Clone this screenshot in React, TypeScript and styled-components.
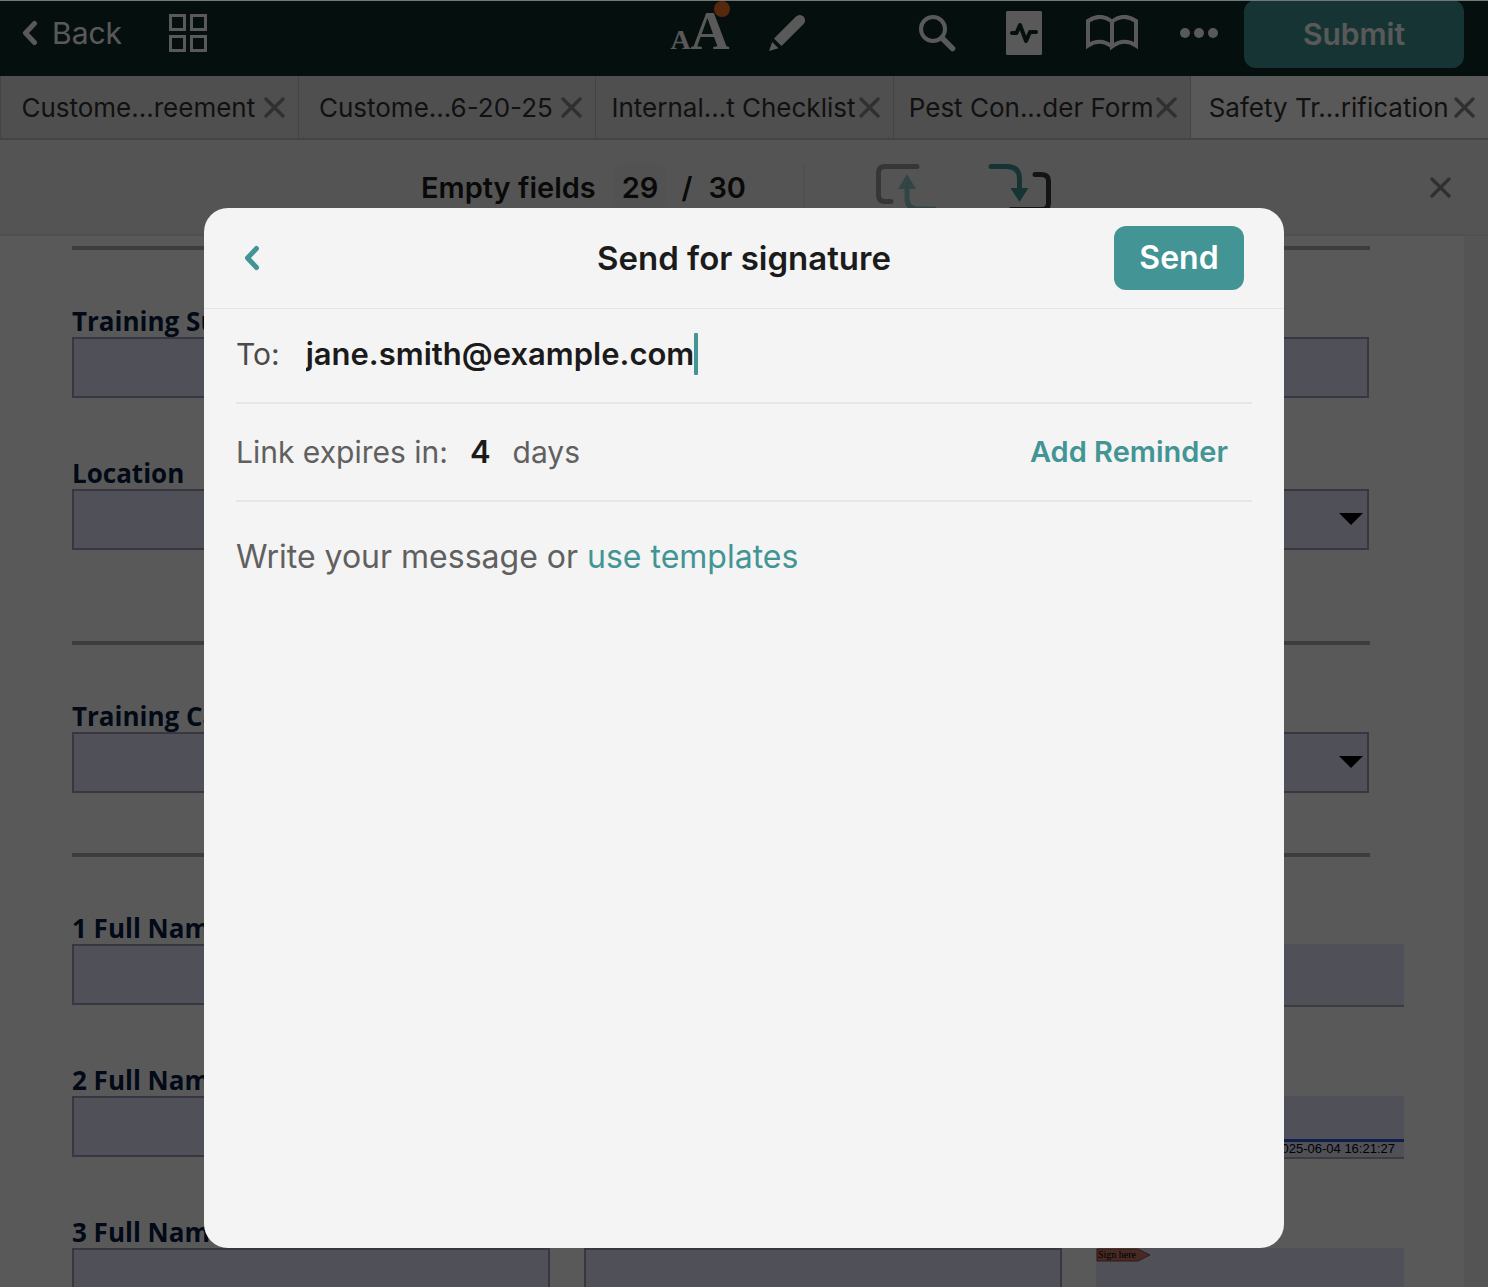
import React from "react";
import styled, { createGlobalStyle } from "styled-components";

const teal = "#429594";
const sans = `Inter, "Open Sans", sans-serif`;

const GlobalStyle = createGlobalStyle`
  * { box-sizing: border-box; }
  body { margin: 0; font-family: ${sans}; color: #1b1b1b; }
  button, input, select, textarea { font: inherit; color: inherit; margin: 0; }
  button { border: 0; padding: 0; background: none; cursor: pointer; }
  svg { display: block; flex: none; }
`;

const Screen = styled.div`
  display: flex;
  flex-direction: column;
  height: 100vh;
  overflow: hidden;
  background: #fff;
`;

const Header = styled.header`
  display: grid;
  grid-template-columns: 1fr auto 1fr;
  flex: none;
  height: 76px;
  padding: 0 24px 0 12px;
  background: #112e28;
  color: #fff;
`;

const Group = styled.div<{ $gap: number; $end?: boolean }>`
  display: flex;
  align-items: center;
  justify-content: ${(p) => (p.$end ? "flex-end" : "flex-start")};
  gap: ${(p) => p.$gap}px;
  height: 65px;
`;

const BackButton = styled.button`
  display: flex;
  align-items: center;
  gap: 14px;
  padding-left: 10px;
  font-size: 30px;
  line-height: 40px;
`;

const TextSizeButton = styled.button`
  position: relative;
  display: flex;
  align-items: baseline;
  padding-top: 6px;
  font-family: "Liberation Serif", serif;
  font-weight: 700;
  line-height: 56px;
`;

const Letter = styled.span<{ $size: number }>`
  font-size: ${(p) => p.$size}px;
`;

const Dot = styled.span`
  position: absolute;
  top: 4px;
  right: 0;
  width: 16px;
  height: 16px;
  border-radius: 50%;
  background: #f5732a;
`;

const SubmitButton = styled.button`
  width: 220px;
  height: 68px;
  border-radius: 12px;
  background: ${teal};
  color: #fff;
  font-size: 30px;
  font-weight: 600;
`;

const HeaderEnd = styled.div`
  display: flex;
  justify-content: flex-end;
  gap: 26px;
`;

const Tabs = styled.nav`
  display: grid;
  grid-template-columns: repeat(5, 1fr);
  flex: none;
  height: 64px;
`;

const Tab = styled.div<{ $active?: boolean }>`
  display: flex;
  align-items: center;
  min-width: 0;
  padding: 2px 12px 0;
  border-left: 1px solid #c4c4c4;
  border-bottom: 2px solid #c4c4c4;
  background: ${(p) => (p.$active ? "#fff" : "#e2e2e2")};
`;

const TabTitle = styled.button`
  flex: 1;
  min-width: 0;
  font-size: 26px;
  line-height: 32px;
  white-space: nowrap;
  color: #333;
`;

const FieldBar = styled.div`
  display: grid;
  grid-template-columns: 1fr auto 1fr;
  align-items: center;
  flex: none;
  height: 96px;
  padding: 2px 36px 0;
  border-bottom: 2px solid #e6e6e6;
  background: #f1f1f1;
`;

const FieldCounter = styled.div`
  display: flex;
  align-items: center;
  grid-column: 2;
  padding-right: 14px;
  font-size: 29px;
  line-height: 50px;
  font-weight: 600;
`;

const CountChip = styled.span`
  margin: 0 16px 0 19px;
  padding: 0 7px;
  border-radius: 8px;
  background: #eaeaea;
`;

const Total = styled.span`
  margin-left: 16px;
`;

const Divider = styled.span`
  width: 2px;
  height: 50px;
  margin: 0 69px 0 57px;
  background: #e6e6e6;
`;

const NavButtons = styled.div`
  display: flex;
  gap: 43px;
`;

const CloseBar = styled.button`
  justify-self: end;
`;

const DocumentArea = styled.main`
  flex: 1;
  min-height: 0;
  overflow: hidden;
  padding-right: 24px;
  background: #f1f1f1;
`;

const Sheet = styled.form`
  padding: 10px 60px 0 72px;
  background: #fff;
  font-family: "Open Sans", sans-serif;
`;

const Section = styled.section<{ $gap: number; $after?: number; $wide?: boolean }>`
  display: flex;
  flex-direction: column;
  gap: ${(p) => p.$gap}px;
  margin-right: ${(p) => (p.$wide ? 0 : 35)}px;
  padding: 51px 0 ${(p) => p.$after || 0}px;
`;

const Rule = styled.hr`
  height: 4px;
  margin: 0 34px 0 0;
  border: 0;
  background: #b0b0b0;
`;

const Field = styled.div`
  display: flex;
  flex-direction: column;
  min-width: 0;
`;

const Label = styled.label`
  height: 36px;
  padding-top: 2px;
  font-size: 26px;
  line-height: 36px;
  font-weight: 700;
  white-space: nowrap;
  color: #061a44;
`;

const Box = styled.input`
  width: 100%;
  height: 61px;
  padding: 0 12px;
  border: 2px solid #a09eba;
  border-radius: 0;
  background: #e5e4ff;
  outline: 0;
`;

const SelectWrap = styled.div`
  position: relative;
`;

const SelectBox = styled(Box).attrs({ as: "select" })`
  appearance: none;
`;

const SelectArrow = styled.svg`
  position: absolute;
  top: 24px;
  right: 6px;
  pointer-events: none;
`;

const NameRow = styled.div`
  display: grid;
  grid-template-columns: 478fr 478fr 308fr;
  gap: 34px;
`;

const Signature = styled.div`
  display: flex;
  flex-direction: column;
  height: 63px;
  margin-top: 36px;
  border-bottom: 2px solid #acacb4;
  background: #e5e4ff;
`;

const Stamp = styled.time`
  margin-top: auto;
  padding: 0 9px 2px 0;
  border-top: 3px solid #2a5bd0;
  font-family: "Liberation Sans", sans-serif;
  font-size: 13px;
  line-height: 13px;
  text-align: right;
  color: #000;
`;

const SignTag = styled.button`
  position: relative;
  width: 55px;
  height: 14px;
  padding-left: 2px;
  font-family: "Liberation Serif", serif;
  font-size: 10px;
  line-height: 12px;
  text-align: left;
  color: #000;
`;

const TagShape = styled.svg`
  position: absolute;
  inset: 0;
`;

const TagText = styled.span`
  position: relative;
  display: block;
`;

const Overlay = styled.div`
  position: fixed;
  inset: 0;
  display: flex;
  justify-content: center;
  padding: 207px 24px 39px;
  border-top: 1px solid #707977;
  background: rgba(0, 0, 0, 0.65);
`;

const Modal = styled.section`
  display: flex;
  flex-direction: column;
  width: 100%;
  max-width: 1080px;
  border-radius: 24px;
  background: #f4f4f4;
`;

const ModalHeader = styled.header`
  display: grid;
  grid-template-columns: 1fr auto 1fr;
  align-items: center;
  height: 101px;
  padding: 0 40px;
  border-bottom: 1px solid #e6e6e6;
`;

const ModalTitle = styled.h1`
  margin: 0;
  font-size: 33px;
  line-height: 42px;
  font-weight: 600;
`;

const ModalBack = styled.button`
  justify-self: start;
`;

const SendButton = styled.button`
  justify-self: end;
  width: 130px;
  height: 64px;
  border-radius: 12px;
  background: ${teal};
  color: #fff;
  font-size: 32px;
  line-height: 40px;
  font-weight: 600;
`;

const ModalRow = styled.div<{ $muted?: boolean }>`
  display: flex;
  align-items: center;
  height: ${(p) => (p.$muted ? 98 : 95)}px;
  margin: 0 32px;
  padding-bottom: ${(p) => (p.$muted ? 0 : 4)}px;
  border-bottom: 2px solid #e6e6e6;
  font-size: 30px;
  line-height: 42px;
  color: ${(p) => (p.$muted ? "#606060" : "#4a4a4a")};
`;

const InlineInput = styled.input`
  field-sizing: content;
  height: 42px;
  padding: 0;
  border: 0;
  outline: 0;
  background: none;
  color: #1b1b1b;
  font-size: 31px;
  font-weight: 600;
`;

const RowLabel = styled.label<{ $gap: number }>`
  margin-right: ${(p) => p.$gap}px;
`;

const Caret = styled.span`
  width: 4px;
  height: 42px;
  border-radius: 1px;
  background: ${teal};
`;

const Unit = styled.span`
  margin-left: 22px;
`;

const Reminder = styled.button`
  margin-left: auto;
  padding-right: 24px;
  color: ${teal};
  font-size: 29px;
  font-weight: 600;
`;

const Hint = styled.p`
  margin: 34px 32px 0;
  font-size: 32px;
  line-height: 42px;
  color: #606060;
`;

const TemplatesLink = styled.a`
  color: ${teal};
  text-decoration: none;
`;

const Message = styled.textarea`
  flex: 1;
  margin: 12px 32px 32px;
  padding: 0;
  border: 0;
  outline: 0;
  resize: none;
  background: none;
  font-size: 32px;
`;

function Chevron({ color }: { color: string }) {
  return (
    <svg width="16" height="26" viewBox="0 0 16 26" fill="none" stroke={color} strokeWidth="5" strokeLinecap="round" strokeLinejoin="round">
      <path d="M12.5 3.5 L3.5 13 L12.5 22.5" />
    </svg>
  );
}

function Cross() {
  return (
    <svg width="22" height="22" viewBox="0 0 22 22" fill="none" stroke="#8a8a8a" strokeWidth="3.4" strokeLinecap="round">
      <path d="M2 2 L19 19 M19 2 L2 19" />
    </svg>
  );
}

const tabs = [
  "Custome...reement",
  "Custome...6-20-25",
  "Internal...t Checklist",
  "Pest Con...der Form",
  "Safety Tr...rification",
];

function TextField({ id, label }: { id: string; label: string }) {
  return (
    <Field>
      <Label htmlFor={id}>{label}</Label>
      <Box id={id} type="text" />
    </Field>
  );
}

function SelectField({ id, label }: { id: string; label: string }) {
  return (
    <Field>
      <Label htmlFor={id}>{label}</Label>
      <SelectWrap>
        <SelectBox id={id} />
        <SelectArrow width="24" height="12" viewBox="0 0 24 12">
          <path d="M0 0 H24 L12 12 Z" fill="#000" />
        </SelectArrow>
      </SelectWrap>
    </Field>
  );
}

function Person({ n, children }: { n: number; children?: React.ReactNode }) {
  return (
    <NameRow>
      <TextField id={`name-${n}`} label={`${n} Full Name`} />
      <TextField id={`title-${n}`} label="Title" />
      <Signature>{children}</Signature>
    </NameRow>
  );
}

export default function App() {
  return (
    <>
      <GlobalStyle />
      <Screen>
        <Header>
          <Group $gap={47}>
            <BackButton type="button">
              <Chevron color="#fff" />
              Back
            </BackButton>
            <button type="button" aria-label="Pages">
              <svg width="38" height="38" viewBox="0 0 38 38" fill="none" stroke="#fff" strokeWidth="3">
                <path d="M1.5 1.5 H15.5 V15.5 H1.5 Z M22.5 1.5 H36.5 V15.5 H22.5 Z M1.5 22.5 H15.5 V36.5 H1.5 Z M22.5 22.5 H36.5 V36.5 H22.5 Z" />
              </svg>
            </button>
          </Group>
          <Group $gap={38}>
            <TextSizeButton type="button" aria-label="Text size">
              <Letter $size={28}>A</Letter>
              <Letter $size={54}>A</Letter>
              <Dot />
            </TextSizeButton>
            <button type="button" aria-label="Edit">
              <svg width="38" height="38" viewBox="0 0 38 38" fill="#fff">
                <path d="M28 2.5 a5.2 5.2 0 0 1 7.6 7.4 L13.5 32 L6 24.6 Z M4.2 28 L10.4 34.2 L1 37 Z" />
              </svg>
            </button>
          </Group>
          <HeaderEnd>
            <Group $gap={42} $end>
              <button type="button" aria-label="Search">
                <svg width="46" height="38" viewBox="0 0 46 38" fill="none" stroke="#fff" strokeLinecap="round">
                  <circle cx="15" cy="15" r="12" strokeWidth="4" />
                  <path d="M24 24 L34.5 34.5" strokeWidth="5.5" />
                </svg>
              </button>
              <button type="button" aria-label="Activity">
                <svg width="38" height="44" viewBox="0 0 38 44">
                  <rect width="36" height="44" rx="1.5" fill="#fff" />
                  <path d="M6 22 H10.5 L14 14 L20 30 L24 21 H30" fill="none" stroke="#112e28" strokeWidth="4" strokeLinecap="round" strokeLinejoin="round" />
                </svg>
              </button>
              <button type="button" aria-label="Guide">
                <svg width="52" height="36" viewBox="0 0 52 36" fill="none" stroke="#fff" strokeWidth="4">
                  <path d="M26 31.5 Q14 22.5 2 30.5 V6 Q14 -2.5 26 6.5 Q38 -2.5 50 6 V30.5 Q38 22.5 26 31.5 V6.5" />
                </svg>
              </button>
              <button type="button" aria-label="More">
                <svg width="38" height="10" viewBox="0 0 38 10" fill="#fff">
                  <circle cx="5" cy="5" r="5" />
                  <circle cx="19" cy="5" r="5" />
                  <circle cx="33" cy="5" r="5" />
                </svg>
              </button>
            </Group>
            <SubmitButton type="button">Submit</SubmitButton>
          </HeaderEnd>
        </Header>
        <Tabs>
          {tabs.map((title, i) => (
            <Tab key={title} $active={i === 4}>
              <TabTitle type="button">{title}</TabTitle>
              <button type="button" aria-label={`Close ${title}`}>
                <Cross />
              </button>
            </Tab>
          ))}
        </Tabs>
        <FieldBar>
          <FieldCounter>
            Empty fields
            <CountChip>29</CountChip>/<Total>30</Total>
            <Divider />
            <NavButtons>
              <button type="button" aria-label="Previous field">
                <svg width="68" height="52" viewBox="0 0 68 52" fill="none" strokeWidth="5" strokeLinecap="round">
                  <path d="M43 4.5 H11 Q4.5 4.5 4.5 11 V33 Q4.5 39.5 11 39.5 H17" stroke="#9a9a9a" />
                  <path d="M33 26 V36 Q33 47 44 47 H60" stroke="#8cc7c7" />
                  <path d="M33 12 L42 27 H24 Z" fill="#8cc7c7" />
                </svg>
              </button>
              <button type="button" aria-label="Next field">
                <svg width="68" height="52" viewBox="0 0 68 52" fill="none" strokeWidth="5" strokeLinecap="round">
                  <path d="M6 4.5 H22 Q34.5 4.5 34.5 17 V26" stroke={teal} />
                  <path d="M34.5 40 L43.5 26 H25.5 Z" fill={teal} />
                  <path d="M50 12.5 H56 Q63.5 12.5 63.5 19 V41 Q63.5 47.5 57 47.5 H26" stroke="#3a3a3a" />
                </svg>
              </button>
            </NavButtons>
          </FieldCounter>
          <CloseBar type="button" aria-label="Close field bar">
            <Cross />
          </CloseBar>
        </FieldBar>
        <DocumentArea>
          <Sheet>
            <Rule />
            <Section $gap={55} $after={91}>
              <TextField id="subject" label="Training Subject" />
              <SelectField id="location" label="Location" />
            </Section>
            <Rule />
            <Section $gap={55} $after={60}>
              <SelectField id="category" label="Training Category" />
            </Section>
            <Rule />
            <Section $gap={53} $wide>
              <Person n={1} />
              <Person n={2}>
                <Stamp>2025-06-04 16:21:27</Stamp>
              </Person>
              <Person n={3}>
                <SignTag type="button">
                  <TagShape width="55" height="14" viewBox="0 0 55 14">
                    <path d="M1 1 H42 L54 7 L42 13 H1 Z" fill="#c87864" stroke="#a04438" />
                  </TagShape>
                  <TagText>Sign here</TagText>
                </SignTag>
              </Person>
            </Section>
          </Sheet>
        </DocumentArea>
      </Screen>
      <Overlay>
        <Modal role="dialog" aria-labelledby="dialog-title">
          <ModalHeader>
            <ModalBack type="button" aria-label="Go back">
              <Chevron color={teal} />
            </ModalBack>
            <ModalTitle id="dialog-title">Send for signature</ModalTitle>
            <SendButton type="button">Send</SendButton>
          </ModalHeader>
          <ModalRow>
            <RowLabel htmlFor="to" $gap={26}>To:</RowLabel>
            <InlineInput id="to" type="text" defaultValue="jane.smith@example.com" />
            <Caret />
          </ModalRow>
          <ModalRow $muted>
            <RowLabel htmlFor="days" $gap={22}>Link expires in:</RowLabel>
            <InlineInput id="days" type="text" inputMode="numeric" defaultValue="4" />
            <Unit>days</Unit>
            <Reminder type="button">Add Reminder</Reminder>
          </ModalRow>
          <Hint>
            Write your message or <TemplatesLink href="#templates">use templates</TemplatesLink>
          </Hint>
          <Message aria-label="Message" />
        </Modal>
      </Overlay>
    </>
  );
}
